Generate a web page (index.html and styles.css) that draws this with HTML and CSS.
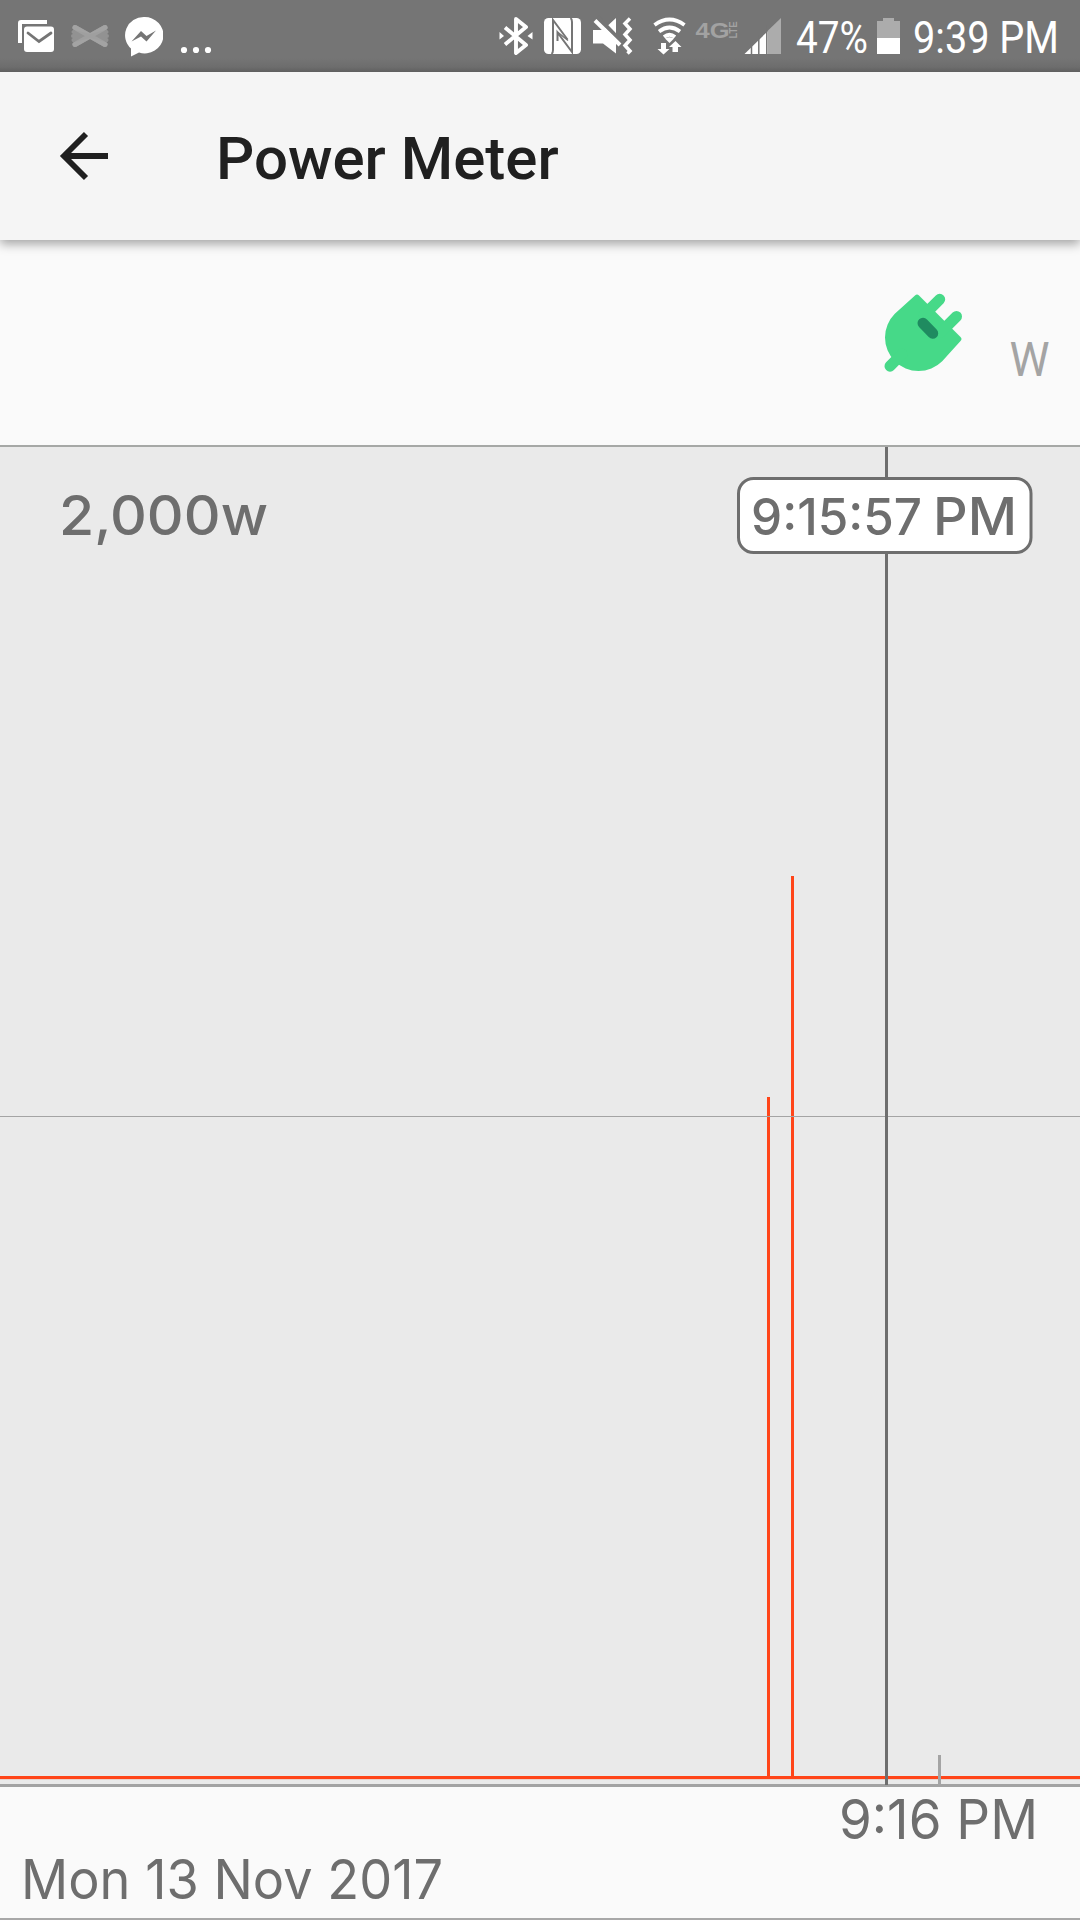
FILE: index.html
```html
<!DOCTYPE html>
<html lang="en">
<head>
<meta charset="utf-8">
<title>Power Meter</title>
<link rel="stylesheet" href="styles.css">
</head>
<body>
<div class="screen">
  <div class="status">
    <div class="status-group">
      <svg width="37" height="72" viewBox="18 0 37 72">
        <path d="M18 43V23q0-3 3-3h26v4H22v19z" fill="#fff"/>
        <rect x="24" y="26.500" width="30" height="25.500" rx="3" fill="#fff"/>
        <path d="M28 33l11 8.500L51 33" fill="none" stroke="#757575" stroke-width="2.800" stroke-linecap="round"/>
      </svg>
      <svg class="bow" width="40" height="72" viewBox="70 0 40 72" stroke-linecap="round" fill="none" stroke="#a3a3a3" stroke-width="5">
        <path d="M75 27.500L105 44.500M105 27.500L75 44.500"/>
        <path d="M73.500 32L106.500 40M106.500 32L73.500 40M73 36h34" stroke="#929292" stroke-width="4"/>
        <path d="M75 27.500L105 44.500M105 27.500L75 44.500" opacity=".8"/>
      </svg>
      <svg class="messenger" width="39" height="72" viewBox="124 0 39 72">
        <path d="M144 17a18.700 18.200 0 1 1-5 35.500L131 56.500V48.500A18.700 18.200 0 0 1 144 17z" fill="#fff"/>
        <path d="M131.500 41.500l9.500-10.500 5.500 5 9.500-5.500-9.500 11-5.500-5z" fill="#757575"/>
      </svg>
      <svg class="more" width="32" height="72" viewBox="180 0 32 72" fill="#fff">
        <circle cx="184" cy="50" r="3.100"/><circle cx="196" cy="50" r="3.100"/><circle cx="208" cy="50" r="3.100"/>
      </svg>
    </div>
    <div class="status-group">
      <svg width="310" height="72" viewBox="480 0 310 72">
        <path d="M505 27.500l21 17.500-10 8V19l10 8-21 17.500" fill="none" stroke="#fff" stroke-width="3.900" stroke-linejoin="round"/>
        <path d="M499.500 32l4.500 4-4.500 3.500zM532.500 32l-5 4 5 3.500z" fill="#fff"/>
        <rect x="544" y="18" width="37" height="36" rx="4.500" fill="#fff"/>
        <path d="M551.500 54q1.500-1 1.500-4V20L567.500 39.500M570.500 18q1.500 1 1.500 4v30L557.500 32.500V41" fill="none" stroke="#757575" stroke-width="2"/>
        <path d="M557.500 32L568 40.500" stroke="#757575" stroke-width="1.500"/>
        <path d="M593 30h10l13-12v35.500L603 43.500h-10z" fill="#fff"/>
        <path d="M597.500 17l27 28" stroke="#757575" stroke-width="4"/>
        <path d="M595 20.500L620 45" stroke="#fff" stroke-width="4"/>
        <path d="M630 18.500l-5 5 5 5.500-5 5.500 5 5.500-5 5.500 5 5.500-2.500 2.500" fill="none" stroke="#fff" stroke-width="3.500"/>
        <path d="M654.500 25q15-11 30 0M659 31.500q10.500-8 21 0M664 37q5.500-4.500 11 0" fill="none" stroke="#fff" stroke-width="3.800"/>
        <path d="M665 38.500q4.500-2.500 9 0L669.500 43z" fill="#fff"/>
        <path d="M661 43h5v6h3.500l-6 5.500-6-5.500h3.500zM672.500 52v-5H669l6.500-6 6 6H678v5z" fill="#fff"/>
        <text class="net" x="695.500" y="38" font-size="22.500" textLength="34" lengthAdjust="spacingAndGlyphs">4G</text>
        <text class="net" transform="translate(737 38.500) rotate(-90)" font-size="10" textLength="17" lengthAdjust="spacingAndGlyphs">LTE</text>
        <path d="M744.500 54L768 31v23z" fill="#fff"/>
        <path d="M768 30.500L781 18v36h-13z" fill="#acacac"/>
        <path d="M751.500 40v14M758.800 35v19M766.800 25v29" stroke="#757575" stroke-width="1.500"/>
      </svg>
      <svg class="readout" width="290" height="72" viewBox="790 0 290 72">
        <text class="clock" x="796" y="53" textLength="72" lengthAdjust="spacingAndGlyphs">47%</text>
        <path d="M877 21h6v-3h11v3h6v33h-23z" fill="#acacac"/>
        <path d="M877 38h23v16h-23z" fill="#fff"/>
        <text class="clock" x="913" y="53" textLength="146" lengthAdjust="spacingAndGlyphs">9:39 PM</text>
      </svg>
    </div>
  </div>

  <header class="appbar">
    <svg width="50" height="50" viewBox="59 131 50 50" fill="none" stroke="#202020" stroke-width="5.800">
      <path d="M108 156H64M86 134L64 156l22 22"/>
    </svg>
    <h1>Power Meter</h1>
  </header>

  <section class="now">
    <svg width="80" height="80" viewBox="883 292 80 80">
      <path d="M915 295.500q2-2 4 0L960.500 337q2 2 0 4L942.200 361.200A33.500 33.500 0 0 1 894.800 313.800z" fill="#46d988"/>
      <path d="M939.700 299.300L924 315M956.500 316.500L941 332M890 366.200L902 354" stroke="#46d988" stroke-width="11" stroke-linecap="round"/>
      <path d="M923 323.200L932.700 333.300" stroke="#1f8b60" stroke-width="11" stroke-linecap="round"/>
    </svg>
    <svg class="unit" width="44" height="70" viewBox="1008 322 44 70">
      <text x="1009.500" y="376" textLength="40" lengthAdjust="spacingAndGlyphs">W</text>
    </svg>
  </section>

  <svg class="chart" width="1080" height="1475" viewBox="0 445 1080 1475">
    <rect y="445" width="1080" height="1339" fill="#eaeaea"/>
    <rect y="445" width="1080" height="2" fill="#a6a8a6"/>
    <g fill="#ff4519">
      <rect x="767" y="1097" width="3" height="680"/>
      <rect x="791" y="876" width="3" height="901"/>
      <rect y="1776" width="1080" height="3"/>
    </g>
    <rect y="1779" width="1080" height="1" fill="#e9d1cb"/>
    <rect y="1116" width="1080" height="1" fill="#a4a4a4"/>
    <rect y="1784" width="1080" height="3" fill="#a3a3a3"/>
    <rect x="938" y="1755" width="3" height="30" fill="#a4a4a4"/>
    <rect x="885" y="447" width="3" height="1338" fill="#6e6e6e"/>
    <rect x="738.500" y="478.500" width="292.500" height="74" rx="15" fill="#fff" stroke="#6e6e6e" stroke-width="3"/>
    <g class="label">
      <text class="bolder" x="59" y="535" font-size="54.500" textLength="209" lengthAdjust="spacingAndGlyphs">2,000w</text>
      <text class="bolder" x="751" y="535" font-size="51" textLength="171" lengthAdjust="spacingAndGlyphs">9:15:57</text>
      <text class="bolder" x="933" y="535" font-size="52" textLength="84" lengthAdjust="spacingAndGlyphs">PM</text>
      <text x="839" y="1839" font-size="54.500" textLength="199" lengthAdjust="spacingAndGlyphs">9:16 PM</text>
      <text x="21" y="1899" font-size="54.500" textLength="422" lengthAdjust="spacingAndGlyphs">Mon 13 Nov 2017</text>
    </g>
    <rect y="1918" width="1080" height="2" fill="#a8a8a8"/>
  </svg>
</div>
</body>
</html>
```
FILE: styles.css
```css
body {
  margin: 0;
  background: #fafafa;
  font-family: Roboto, sans-serif;
}
svg {
  display: block;
  flex: none;
}
.screen {
  width: 1080px;
  height: 1920px;
  display: flex;
  flex-direction: column;
  overflow: hidden;
}
.status {
  height: 72px;
  flex: none;
  display: flex;
  justify-content: space-between;
  padding-left: 18px;
  background: linear-gradient(#757575 58px, #6d6d6d 67px, #5f5f5f 72px);
}
.status-group {
  display: flex;
}
.bow {
  margin-left: 15px;
}
.messenger {
  margin-left: 14px;
}
.more {
  margin-left: 17px;
}
.clock {
  font: 400 45px Roboto, sans-serif;
  fill: #fff;
}
.net {
  font-family: "Liberation Sans", sans-serif;
  font-weight: 700;
  fill: #a2a2a2;
}
.appbar {
  height: 168px;
  flex: none;
  display: flex;
  align-items: center;
  padding-left: 59px;
  background: #f5f5f5;
  box-shadow: 0 4px 10px rgba(0, 0, 0, .35);
  clip-path: inset(0 0 -20px 0);
  z-index: 1;
}
.appbar h1 {
  margin: 6px 0 0 107px;
  font-size: 60px;
  font-weight: 500;
  line-height: 70px;
  color: #202020;
}
.now {
  height: 205px;
  flex: none;
  box-sizing: border-box;
  display: flex;
  justify-content: flex-end;
  align-items: flex-start;
  padding: 52px 28px 0 0;
}
.unit {
  margin: 30px 0 0 45px;
  font: 400 48px Roboto, sans-serif;
  fill: #a4a4a4;
}
.label {
  font-family: Inter, sans-serif;
  fill: #6e6e6e;
}
.bolder {
  font-weight: 450;
}
```
